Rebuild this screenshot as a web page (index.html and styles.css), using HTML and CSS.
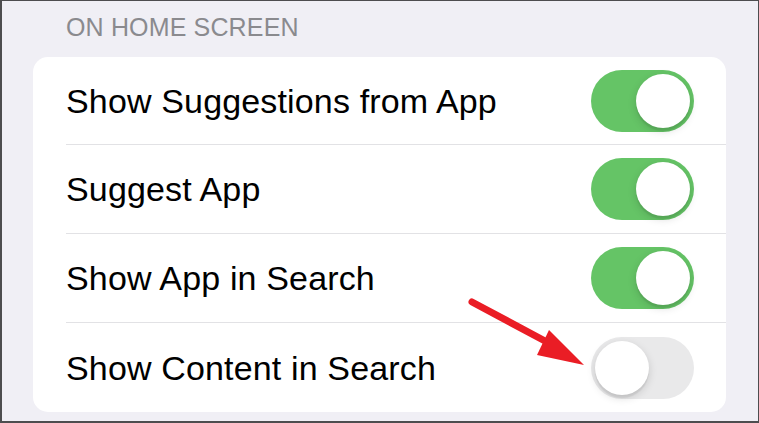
FILE: index.html
```html
<!DOCTYPE html>
<html lang="en">
<head>
<meta charset="utf-8">
<title>On Home Screen</title>
<link rel="stylesheet" href="styles.css">
</head>
<body>
<div class="frame">
  <div class="section-title">ON HOME SCREEN</div>
  <div class="card">
    <div class="row">
      <span class="label">Show Suggestions from App</span>
      <span class="toggle on"><span class="knob"></span></span>
    </div>
    <div class="row">
      <span class="label">Suggest App</span>
      <span class="toggle on"><span class="knob"></span></span>
    </div>
    <div class="row">
      <span class="label">Show App in Search</span>
      <span class="toggle on"><span class="knob"></span></span>
    </div>
    <div class="row">
      <span class="label">Show Content in Search</span>
      <span class="toggle off"><span class="knob"></span></span>
    </div>
  </div>
  <svg class="arrow" width="130" height="80" viewBox="0 0 130 80">
    <line x1="12" y1="12" x2="100" y2="59" stroke="#ea1d25" stroke-width="7" stroke-linecap="round"/>
    <polygon points="124,75 89,40 77,65" fill="#ea1d25"/>
  </svg>
</div>
</body>
</html>
```
FILE: styles.css
```css
* { box-sizing: border-box; }
html, body {
  margin: 0;
  padding: 0;
  width: 759px;
  height: 423px;
  overflow: hidden;
}
body {
  font-family: "Liberation Sans", Arial, sans-serif;
  background: #f0eff5;
}
.frame {
  position: relative;
  width: 759px;
  height: 423px;
  border-top: 1px solid #4d4d4f;
  border-left: 2px solid #4d4d4f;
  border-right: 1px solid #4d4d4f;
  border-bottom: 2px solid #4d4d4f;
  padding: 11px 0 0 31px;
}
.section-title {
  font-size: 25px;
  line-height: 30px;
  letter-spacing: 0.15px;
  color: #8a8a8e;
  padding-left: 33px;
  height: 45px;
}
.card {
  width: 693px;
  background: #ffffff;
  border-radius: 15px;
  padding-left: 33px;
}
.row {
  display: flex;
  align-items: center;
  justify-content: space-between;
  height: 89px;
  padding-right: 32px;
  border-bottom: 1px solid #e2e2e5;
}
.row:first-child { height: 88px; }
.row:last-child { border-bottom: none; height: 89px; }
.label {
  font-size: 34px;
  line-height: 40px;
  letter-spacing: 0.15px;
  color: #000000;
}
.toggle {
  display: flex;
  align-items: center;
  width: 103px;
  height: 62px;
  border-radius: 31px;
  padding: 4px;
}
.toggle.on {
  background: #65c466;
  justify-content: flex-end;
}
.toggle.off {
  background: #e9e9ea;
  justify-content: flex-start;
}
.knob {
  width: 54px;
  height: 54px;
  border-radius: 50%;
  background: #ffffff;
  box-shadow: 0 3px 8px rgba(0, 0, 0, 0.15), 0 3px 1px rgba(0, 0, 0, 0.06);
}
.arrow {
  position: absolute;
  left: 458px;
  top: 289px;
}
```
